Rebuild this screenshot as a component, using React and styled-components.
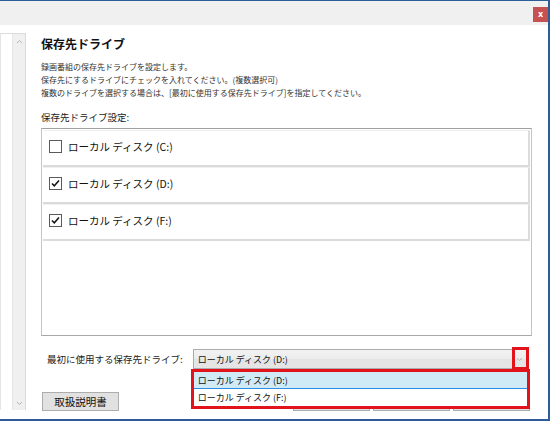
import React from 'react';
import styled, { createGlobalStyle } from 'styled-components';

const GlobalStyle = createGlobalStyle`
  html, body {
    margin: 0;
    padding: 0;
    background: #fff;
  }
  body {
    font-family: "Noto Sans CJK JP", "Noto Sans", sans-serif;
    color: #000;
  }
  * {
    box-sizing: border-box;
  }
`;

const ACCENT = '#2d5c98';
const MARK = '#e3131c';

const Window = styled.div`
  width: 550px;
  height: 421px;
  display: flex;
  flex-direction: column;
  background: #fff;
  border-top: 1px solid ${ACCENT};
  border-right: 2px solid ${ACCENT};
  border-bottom: 2px solid ${ACCENT};
  overflow: hidden;
`;

const TitleBar = styled.div`
  height: 24px;
  flex: none;
  background: #f0f0f0;
  display: flex;
  justify-content: flex-end;
  align-items: flex-start;
  padding-top: 6px;
`;

const CloseButton = styled.button`
  width: 15px;
  height: 15px;
  padding: 0;
  border: none;
  background: #c75050;
  color: #fff;
  font-family: "DejaVu Sans", sans-serif;
  font-size: 8px;
  font-weight: bold;
  line-height: 15px;
  text-align: center;
`;

const Body = styled.div`
  flex: 1;
  display: flex;
  min-height: 0;
`;

const SidePanel = styled.div`
  width: 26px;
  flex: none;
  margin: 8px 0 9px;
  display: flex;
  border-top: 1px solid #dcdcdc;
  border-left: 1px solid #e4e4e4;
`;

const SideBlank = styled.div`
  width: 11px;
  background: #fff;
`;

const ScrollTrack = styled.div`
  width: 14px;
  background: #f0f0f0;
  border-left: 1px solid #e6e6e6;
  border-right: 1px solid #dadada;
  display: flex;
  flex-direction: column;
  justify-content: space-between;
  align-items: center;
  padding: 5px 0 4px;
`;

const Main = styled.div`
  flex: 1;
  display: flex;
  flex-direction: column;
  padding: 10px 16px 0 15px;
`;

const Heading = styled.h1`
  margin: 0;
  font-size: 12px;
  font-weight: bold;
  line-height: 17px;
  color: #111;
`;

const Description = styled.p`
  margin: 8px 0 0;
  font-size: 8px;
  line-height: 13px;
  color: #333;
`;

const SectionLabel = styled.div`
  margin-top: 12px;
  font-size: 9.5px;
  line-height: 13px;
  color: #222;
`;

const ListBox = styled.div`
  margin-top: 4px;
  height: 208px;
  flex: none;
  border: 1px solid #c4c4c4;
  border-top-color: #a0a0a0;
  border-bottom-color: #a8a8a8;
  padding: 1px 1px 0 1px;
  display: flex;
  flex-direction: column;
`;

const DriveRow = styled.div`
  height: 37px;
  flex: none;
  display: flex;
  align-items: center;
  gap: 6px;
  padding: 0 0 4px 6px;
  background: #fff;
  border-top: 1px solid #f0f0f0;
  border-bottom: 2px solid #dadada;
  border-right: 2px solid #dcdcdc;
  font-size: 10.5px;
  color: #111;
`;

const SelectRow = styled.div`
  margin-top: 13px;
  height: 20px;
  flex: none;
  display: flex;
  align-items: center;
  padding: 0 4px 0 6px;
`;

const SelectLabel = styled.span`
  font-size: 9.5px;
  color: #222;
  white-space: nowrap;
  margin-right: 10px;
`;

const SelectWrap = styled.div`
  position: relative;
  flex: 1;
  height: 20px;
`;

const SelectBox = styled.div`
  height: 100%;
  display: flex;
  align-items: center;
  border: 1px solid #acacac;
  background: linear-gradient(#f2f2f2 0%, #ececec 50%, #e4e4e4 51%, #e5e5e5 100%);
  font-size: 9px;
  color: #111;
  padding-left: 4px;
`;

const SelectValue = styled.span`
  flex: 1;
`;

const ArrowCell = styled.span`
  width: 15px;
  height: 100%;
  display: flex;
  align-items: center;
  justify-content: center;
`;

const ArrowMark = styled.div`
  position: absolute;
  top: -2px;
  right: -1px;
  width: 17px;
  height: 23px;
  border: 3px solid ${MARK};
`;

const DropList = styled.div`
  position: absolute;
  top: 20px;
  left: -2px;
  right: -2px;
  height: 40px;
  border: 3px solid ${MARK};
  background: #fff;
  display: flex;
  flex-direction: column;
  z-index: 2;
`;

const DropItem = styled.div`
  height: 17px;
  display: flex;
  align-items: center;
  padding-left: 4px;
  font-size: 9px;
  color: #111;
  background: ${(p) => (p.$active ? '#d1ebf6' : '#fff')};
  border-bottom: ${(p) => (p.$active ? '1px solid #2b8fe3' : 'none')};
`;

const ButtonRow = styled.div`
  margin-top: 23px;
  display: flex;
  justify-content: space-between;
  padding: 0 2px 0 1px;
`;

const ButtonGroup = styled.div`
  display: flex;
  gap: 3px;
`;

const PushButton = styled.button`
  width: 77px;
  height: 19px;
  padding: 0;
  border: 1px solid #adadad;
  background: #e1e1e1;
  font-family: inherit;
  font-size: 10.5px;
  line-height: 17px;
  color: #111;
`;

function Chevron({ up }) {
  return (
    <svg width="7" height="5" viewBox="0 0 7 5">
      <polyline
        points={up ? '1,4 3.5,1.5 6,4' : '1,1 3.5,3.5 6,1'}
        fill="none"
        stroke="#b4b4b4"
        strokeWidth="1"
      />
    </svg>
  );
}

function CheckBox({ checked }) {
  return (
    <svg width="13" height="13" viewBox="0 0 13 13">
      <rect x="0.5" y="0.5" width="12" height="12" fill="#fff" stroke="#5a5a5a" />
      {checked && (
        <polyline points="3,6.4 5.3,8.8 10,3.6" fill="none" stroke="#111" strokeWidth="1.5" />
      )}
    </svg>
  );
}

const drives = [
  { label: 'ローカル ディスク (C:)', checked: false },
  { label: 'ローカル ディスク (D:)', checked: true },
  { label: 'ローカル ディスク (F:)', checked: true },
];

export default function App() {
  return (
    <>
      <GlobalStyle />
      <Window>
        <TitleBar>
          <CloseButton>x</CloseButton>
        </TitleBar>
        <Body>
          <SidePanel>
            <SideBlank />
            <ScrollTrack>
              <Chevron up />
              <Chevron />
            </ScrollTrack>
          </SidePanel>
          <Main>
            <Heading>保存先ドライブ</Heading>
            <Description>
              録画番組の保存先ドライブを設定します。
              <br />
              保存先にするドライブにチェックを入れてください。(複数選択可)
              <br />
              複数のドライブを選択する場合は、[最初に使用する保存先ドライブ]を指定してください。
            </Description>
            <SectionLabel>保存先ドライブ設定:</SectionLabel>
            <ListBox>
              {drives.map((d) => (
                <DriveRow key={d.label}>
                  <CheckBox checked={d.checked} />
                  <span>{d.label}</span>
                </DriveRow>
              ))}
            </ListBox>
            <SelectRow>
              <SelectLabel>最初に使用する保存先ドライブ:</SelectLabel>
              <SelectWrap>
                <SelectBox>
                  <SelectValue>ローカル ディスク (D:)</SelectValue>
                  <ArrowCell>
                    <Chevron />
                  </ArrowCell>
                </SelectBox>
                <ArrowMark />
                <DropList>
                  <DropItem $active>ローカル ディスク (D:)</DropItem>
                  <DropItem>ローカル ディスク (F:)</DropItem>
                </DropList>
              </SelectWrap>
            </SelectRow>
            <ButtonRow>
              <PushButton>取扱説明書</PushButton>
              <ButtonGroup>
                <PushButton />
                <PushButton />
                <PushButton />
              </ButtonGroup>
            </ButtonRow>
          </Main>
        </Body>
      </Window>
    </>
  );
}
